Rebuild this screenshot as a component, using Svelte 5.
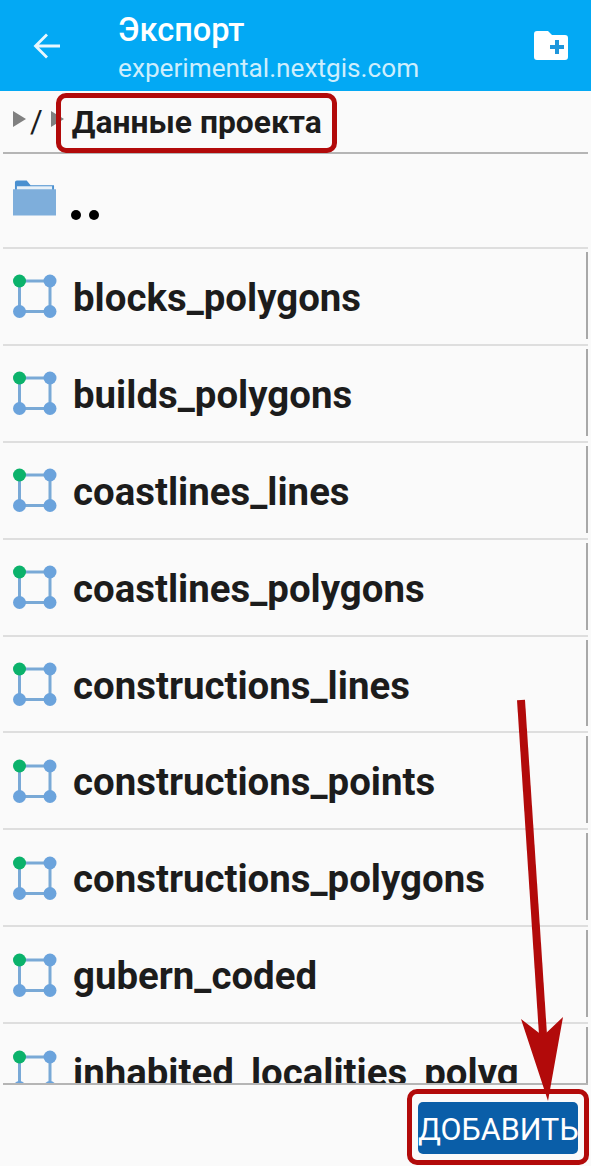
<script>
	const layers = [
		'blocks_polygons',
		'builds_polygons',
		'coastlines_lines',
		'coastlines_polygons',
		'constructions_lines',
		'constructions_points',
		'constructions_polygons',
		'gubern_coded',
		'inhabited_localities_polyg'
	];
</script>

<div class="screen">
	<header class="toolbar">
		<button class="back" aria-label="Назад">
			<svg width="30" height="30" viewBox="0 0 30 30" fill="none">
				<path stroke="currentColor" stroke-width="2.8" d="M28 15H4M15 3.5 3.5 15 15 26.5" />
			</svg>
		</button>
		<div class="titles">
			<div class="title">Экспорт</div>
			<div class="subtitle">experimental.nextgis.com</div>
		</div>
		<button class="new-folder" aria-label="Новая папка">
			<svg width="34" height="30" viewBox="0 0 34 30">
				<path fill="#fff" d="M3 1h11l4 4h13a3 3 0 0 1 3 3v19a3 3 0 0 1-3 3H3a3 3 0 0 1-3-3V4a3 3 0 0 1 3-3Z" />
				<path fill="#1e96dc" d="M21 10h4v5h5v4h-5v5h-4v-5h-5v-4h5Z" />
			</svg>
		</button>
	</header>

	<nav class="path">
		<span class="arrow"></span>
		<span class="slash">/</span>
		<span class="arrow second"></span>
		<span class="current">Данные проекта</span>
	</nav>

	<div class="list">
		<div class="row parent">
			<svg class="icon" width="44" height="38" viewBox="0 0 44 38">
				<path fill="#4a90d0" d="M2 4a2 2 0 0 1 2-2h10l4 5h24v6H2Z" />
				<path fill="#e8f1f8" d="M4 8h36v4H4Z" />
				<path fill="#7eaedb" d="M0 11h44v27H0Z" />
			</svg>
			<span class="dots"><i></i><i></i></span>
		</div>
		{#each layers as name}
			<div class="row">
				<svg class="icon" width="44" height="44" viewBox="0 0 44 44">
					<path fill="none" stroke="#79a9d6" stroke-width="3" d="M6.500 7H37V37.500H6.500Z" />
					<circle cx="37" cy="7" r="6.500" fill="#6ba3dc" />
					<circle cx="6.500" cy="37.500" r="6.500" fill="#6ba3dc" />
					<circle cx="37" cy="37.500" r="6.500" fill="#6ba3dc" />
					<circle cx="6.500" cy="7" r="6.500" fill="#0bb26b" />
				</svg>
				<span class="name">{name}</span>
				<span class="scrollbar"></span>
			</div>
		{/each}
	</div>

	<footer class="actions">
		<button class="add">ДОБАВИТЬ</button>
	</footer>

	<div class="mark mark-path"></div>
	<div class="mark mark-add"></div>
	<svg class="pointer" width="591" height="1166" viewBox="0 0 591 1166">
		<path fill="none" stroke="#b20a0a" stroke-width="8" d="M521 700 544 1050" />
		<path fill="#b20a0a" d="M521 1019 543 1036 563 1017 548 1101Z" />
	</svg>
</div>

<style>
	:global(body) {
		background: #fafafa;
	}

	.screen {
		position: relative;
		width: 591px;
		height: 1166px;
		overflow: hidden;
		background: #fafafa;
		font-family: Roboto, sans-serif;
		color: #1c1c1c;
	}

	button {
		border: 0;
		padding: 0;
		background: none;
		font: inherit;
	}

	.toolbar {
		display: flex;
		align-items: center;
		box-sizing: border-box;
		height: 91px;
		padding-left: 32px;
		background: #03a9f4;
		color: #fff;
	}

	.back {
		display: flex;
		width: 87px;
		color: #e8f7fe;
	}

	.titles {
		flex: 1;
		margin-top: 3px;
		margin-left: -1px;
	}

	.title {
		font-size: 32.500px;
		font-weight: 500;
		line-height: 42px;
	}

	.subtitle {
		font-size: 26.200px;
		line-height: 34px;
		color: #cdeefd;
	}

	.new-folder {
		display: flex;
		margin-right: 23px;
		margin-top: -1px;
	}

	.path {
		display: flex;
		align-items: center;
		box-sizing: border-box;
		height: 63px;
		margin: 0 3px;
		padding: 0 0 0 10px;
		border-bottom: 2px solid #b5b5b5;
	}

	.arrow {
		width: 0;
		height: 0;
		margin-bottom: 6px;
		border-left: 13px solid #808080;
		border-top: 8px solid transparent;
		border-bottom: 8px solid transparent;
	}

	.slash {
		margin: 0 8px 0 4px;
		font-size: 31px;
		color: #1c1c1c;
	}

	.second {
		margin-right: 8px;
	}

	.current {
		font-size: 31.800px;
		font-weight: 700;
	}

	.list {
		height: 929px;
		overflow: hidden;
		border-bottom: 2px solid #b5b5b5;
		margin: 0 3px;
	}

	.row {
		position: relative;
		display: flex;
		align-items: center;
		box-sizing: border-box;
		height: 96.900px;
		margin: 0 -3px;
		padding: 0 0 0 13px;
		border-bottom: 2px solid #dedede;
	}

	.row.parent {
		height: 95px;
		padding-bottom: 0;
	}

	.parent .icon {
		margin-bottom: 8px;
		width: 43px;
	}

	.icon {
		flex: none;
	}

	.name {
		margin-left: 16px;
		padding-top: 2px;
		font-size: 38.400px;
		font-weight: 700;
		white-space: nowrap;
	}

	.dots {
		display: flex;
		gap: 8px;
		margin: 28px 0 0 15px;
	}

	.dots i {
		width: 10px;
		height: 10px;
		border-radius: 50%;
		background: #000;
	}

	.scrollbar {
		position: absolute;
		top: 3px;
		bottom: 5px;
		right: 3px;
		width: 2px;
		background: #a8a8a8;
	}

	.actions {
		display: flex;
		justify-content: flex-end;
		padding: 17px 13px 0 0;
	}

	.add {
		width: 160px;
		height: 52px;
		padding-top: 2px;
		border-radius: 5px;
		background: #0a5ea8;
		color: #fff;
		font-size: 30.500px;
		white-space: nowrap;
	}

	.mark {
		position: absolute;
		box-sizing: border-box;
		border: 5px solid #b20a0a;
		border-radius: 10px;
	}

	.mark-path {
		left: 56px;
		top: 93px;
		width: 281px;
		height: 60px;
	}

	.mark-add {
		left: 407px;
		top: 1089px;
		width: 182px;
		height: 76px;
	}

	.pointer {
		position: absolute;
		left: 0;
		top: 0;
	}
</style>
